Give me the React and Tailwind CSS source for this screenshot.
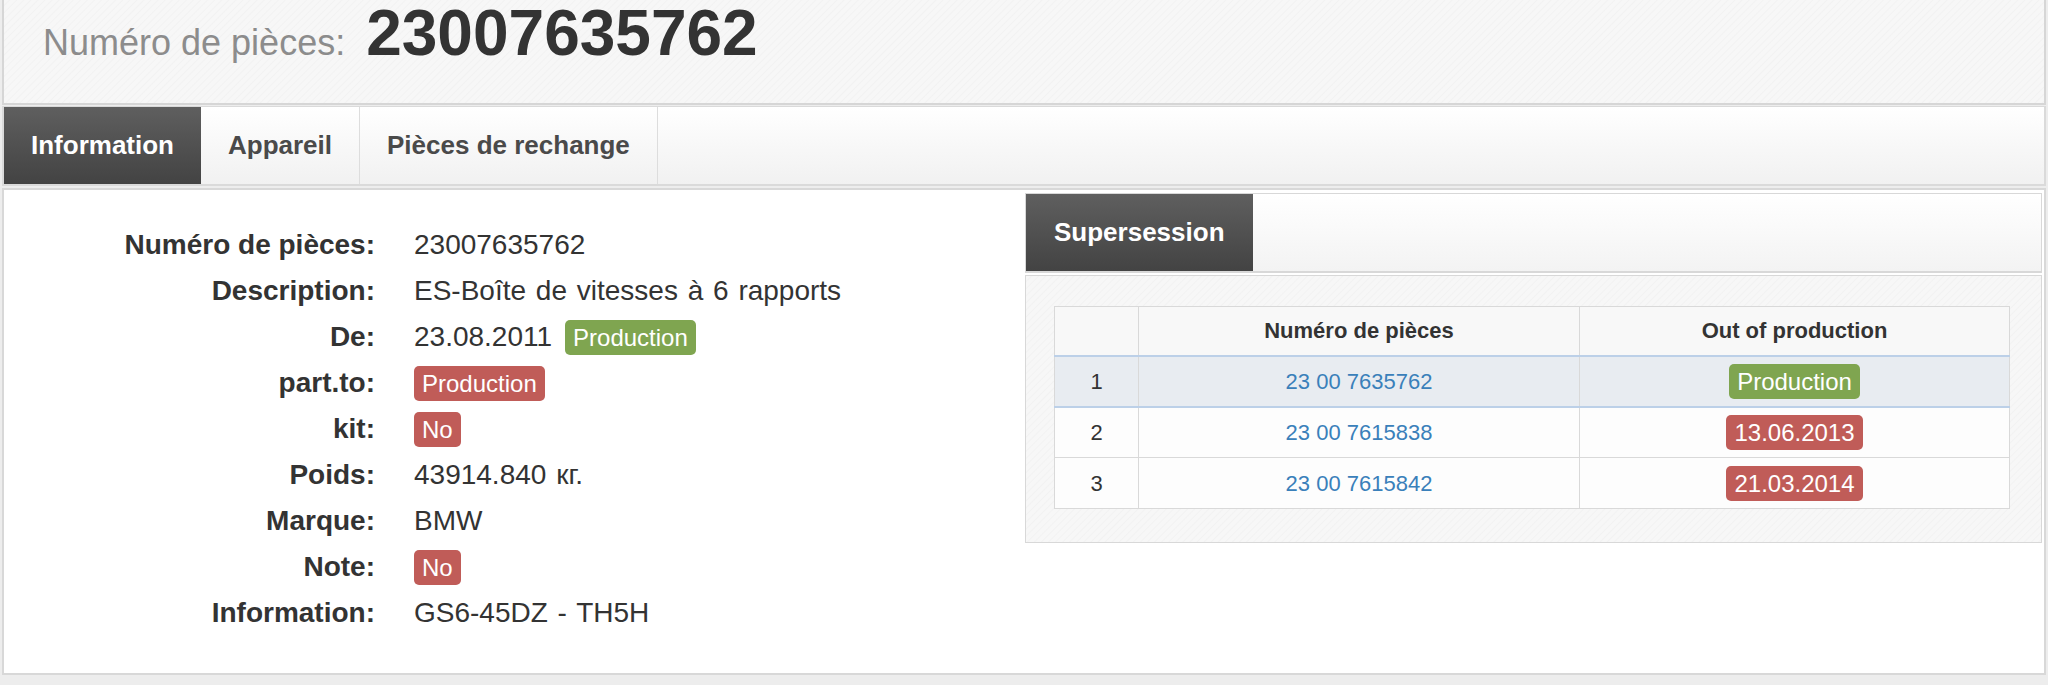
import React from "react";

const texture =
  "bg-[#f6f6f6] bg-[repeating-linear-gradient(135deg,#f7f7f7_0px,#f7f7f7_3px,#f2f2f2_4px,#f7f7f7_5px)]";

function Badge({ color, children }) {
  return (
    <span
      className={`inline-block rounded-[5px] px-[8px] py-[3px] text-[24px] leading-[29px] text-white [word-spacing:0px] ${
        color === "green" ? "bg-[#7fa550]" : "bg-[#c05c58]"
      }`}
    >
      {children}
    </span>
  );
}

const rows = [
  ["Numéro de pièces:", "23007635762"],
  ["Description:", "ES-Boîte de vitesses à 6 rapports"],
  [
    "De:",
    <span className="flex items-center gap-[13px]">
      <span>23.08.2011</span>
      <Badge color="green">Production</Badge>
    </span>,
  ],
  ["part.to:", <Badge color="red">Production</Badge>],
  ["kit:", <Badge color="red">No</Badge>],
  ["Poids:", "43914.840 кг."],
  ["Marque:", "BMW"],
  ["Note:", <Badge color="red">No</Badge>],
  ["Information:", "GS6-45DZ - TH5H"],
];

const tableRows = [
  { n: "1", num: "23 00 7635762", badge: "Production", color: "green", active: true },
  { n: "2", num: "23 00 7615838", badge: "13.06.2013", color: "red" },
  { n: "3", num: "23 00 7615842", badge: "21.03.2014", color: "red" },
];

export default function App() {
  return (
    <div className="min-h-[685px] bg-[#ededed] font-['Liberation_Sans',Arial,sans-serif] text-[#333]">
      <div className="mx-[2px]">
        {/* Header */}
        <div
          className={`flex h-[105px] items-baseline border-x-2 border-b-2 border-[#d6d6d6] pl-[39px] pt-[1px] ${texture}`}
        >
          <span className="text-[36px] text-[#8c8c8c]">Numéro de pièces:</span>
          <span className="ml-[21px] text-[64px] font-bold leading-none text-[#333]">
            23007635762
          </span>
        </div>

        {/* Tabs */}
        <div className="mt-[1px] flex h-[80px] border-x-2 border-t border-b-2 border-[#dadada] bg-linear-to-b from-white to-[#f1f1f1]">
          <div className="flex items-center bg-linear-to-b from-[#5f5f5f] to-[#434343] px-[27px] text-[26px] font-bold text-white">
            Information
          </div>
          <div className="flex items-center border-r border-[#dddddd] px-[27px] text-[26px] font-bold text-[#4a4a4a]">
            Appareil
          </div>
          <div className="flex items-center border-r border-[#dddddd] px-[27px] text-[26px] font-bold text-[#4a4a4a]">
            Pièces de rechange
          </div>
        </div>

        {/* Content */}
        <div className="mt-[2px] flex h-[487px] border-2 border-[#d8d8d8] bg-white">
          <div className="flex-1 pt-[32px]">
            <div className="grid grid-cols-[371px_1fr] auto-rows-[46px] items-center gap-x-[39px] text-[28px]">
              {rows.map(([label, value], i) => (
                <React.Fragment key={i}>
                  <div className="text-right font-bold text-[#333]">{label}</div>
                  <div className="flex items-center text-[#333] [word-spacing:2px]">{value}</div>
                </React.Fragment>
              ))}
            </div>
          </div>

          <div className="mr-[2px] mt-[3px] w-[1017px] self-start">
            <div className="flex h-[80px] border border-b-2 border-[#d8d8d8] bg-linear-to-b from-white to-[#f3f3f3]">
              <div className="flex items-center bg-linear-to-b from-[#5f5f5f] to-[#434343] px-[28px] text-[26px] font-bold text-white">
                Supersession
              </div>
            </div>
            <div className={`mt-[2px] border border-[#d8d8d8] pb-[33px] pl-[28px] pr-[31px] pt-[30px] ${texture}`}>
              <table className="w-full border-collapse text-[22px]">
                <thead>
                  <tr className="h-[49px] bg-[#f8f8f8]">
                    <th className="w-[84px] border border-[#d9d9d9]"></th>
                    <th className="w-[441px] border border-[#d9d9d9] font-bold text-[#333]">
                      Numéro de pièces
                    </th>
                    <th className="border border-[#d9d9d9] font-bold text-[#333]">
                      Out of production
                    </th>
                  </tr>
                </thead>
                <tbody>
                  {tableRows.map((r) => (
                    <tr
                      key={r.n}
                      className={
                        r.active
                          ? "h-[51px] border-y-2 border-[#bcd0e8] bg-[#e8ecf1]"
                          : "h-[51px] bg-[#fdfdfd]"
                      }
                    >
                      <td
                        className={`text-center text-[#333] ${
                          r.active ? "border-x border-[#d9d9d9]" : "border border-[#d9d9d9]"
                        }`}
                      >
                        {r.n}
                      </td>
                      <td
                        className={`text-center text-[#3a80ba] ${
                          r.active ? "border-x border-[#d9d9d9]" : "border border-[#d9d9d9]"
                        }`}
                      >
                        {r.num}
                      </td>
                      <td
                        className={`text-center ${
                          r.active ? "border-x border-[#d9d9d9]" : "border border-[#d9d9d9]"
                        }`}
                      >
                        <Badge color={r.color}>{r.badge}</Badge>
                      </td>
                    </tr>
                  ))}
                </tbody>
              </table>
            </div>
          </div>
        </div>
      </div>
    </div>
  );
}
